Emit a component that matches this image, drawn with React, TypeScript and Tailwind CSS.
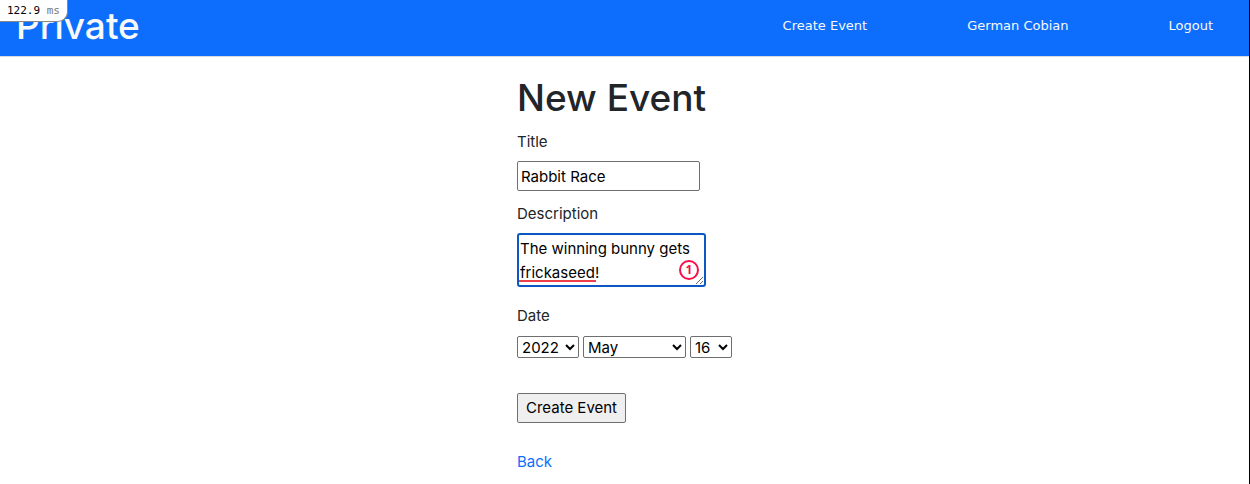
import { useState } from 'react';

const months = [
  'January', 'February', 'March', 'April', 'May', 'June',
  'July', 'August', 'September', 'October', 'November', 'December',
];
const years = ['2020', '2021', '2022', '2023', '2024'];
const days = Array.from({ length: 31 }, (_, i) => String(i + 1));

const fieldBorder = 'border border-[#6f6f6f] rounded-[2px] bg-white text-black';
const selectClass = 'h-[22px] border border-[#6f6f6f] rounded-[2px] bg-white text-black leading-5';

function TimerBadge() {
  return (
    <div className="absolute left-0 top-0 flex h-[22px] w-[68px] items-center rounded-br-[10px] border-b border-r border-[#888] bg-white pl-[7px] font-['DejaVu_Sans_Mono',monospace] text-[11px] leading-none text-black">
      <span className="whitespace-pre">122.9 </span>
      <span className="text-[#777]">ms</span>
    </div>
  );
}

function NavBar() {
  return (
    <header className="flex h-[57px] items-center justify-between border-b border-[#d5d9e6] bg-[#0d6efd] pb-[5px] pl-4 pr-9">
      <a href="#home" className="text-[37px] font-medium leading-[48px] text-[#f8f9fa]">Private</a>
      <nav className="flex gap-[100px] font-['DejaVu_Sans',sans-serif] text-[13px] leading-5 text-[#f8f9fa]">
        <a href="#create">Create Event</a>
        <a href="#profile">German Cobian</a>
        <a href="#logout">Logout</a>
      </nav>
    </header>
  );
}

function EventForm() {
  const [title, setTitle] = useState('Rabbit Race');
  const [description, setDescription] = useState('The winning bunny gets frickaseed!');
  return (
    <form className="flex flex-col items-start" onSubmit={(e) => e.preventDefault()}>
      <label htmlFor="title">Title</label>
      <input
        id="title"
        type="text"
        value={title}
        onChange={(e) => setTitle(e.target.value)}
        className={`mt-[7px] h-[30px] w-[183px] px-[3px] ${fieldBorder}`}
      />
      <label htmlFor="description" className="mt-[11px]">Description</label>
      <div className="relative mt-[7px] h-[54px] w-[189px]">
        <textarea
          id="description"
          value={description}
          spellCheck={false}
          onChange={(e) => setDescription(e.target.value)}
          className="block h-full w-full overflow-hidden rounded-[3px] border-2 border-[#0b57c4] bg-white px-px pt-[2px] text-black outline-none"
        />
        <span className="absolute bottom-[5px] left-[2px] h-[2px] w-[77px] bg-[#ee3f4b]" />
        <span className="absolute bottom-[7px] right-[7px] flex h-5 w-5 items-center justify-center rounded-full border-2 border-[#f5104c] bg-white font-['Noto_Sans',sans-serif] text-[12px] font-bold leading-none text-[#f5104c]">
          1
        </span>
      </div>
      <label htmlFor="month" className="mt-[17px]">Date</label>
      <div className="mt-2 flex gap-1">
        <select aria-label="Year" defaultValue="2022" className={`w-[62px] ${selectClass}`}>
          {years.map((y) => <option key={y}>{y}</option>)}
        </select>
        <select id="month" defaultValue="May" className={`w-[103px] ${selectClass}`}>
          {months.map((m) => <option key={m}>{m}</option>)}
        </select>
        <select aria-label="Day" defaultValue="16" className={`w-[42px] ${selectClass}`}>
          {days.map((d) => <option key={d}>{d}</option>)}
        </select>
      </div>
      <button type="submit" className="mt-[35px] h-[30px] w-[109px] rounded-[2px] border border-[#6f6f6f] bg-[#efefef] text-black">
        Create Event
      </button>
    </form>
  );
}

export default function App() {
  return (
    <div className="relative min-h-screen border-r border-black bg-white font-['Inter',sans-serif] text-[15px] leading-6 text-[#212529]">
      <NavBar />
      <main className="mx-auto w-[215px] pt-[17px]">
        <h1 className="mb-2 whitespace-nowrap text-[37px] font-medium leading-[48px]">New Event</h1>
        <EventForm />
        <a href="#back" className="mt-[27px] inline-block text-[#0d6efd]">Back</a>
      </main>
      <TimerBadge />
    </div>
  );
}
